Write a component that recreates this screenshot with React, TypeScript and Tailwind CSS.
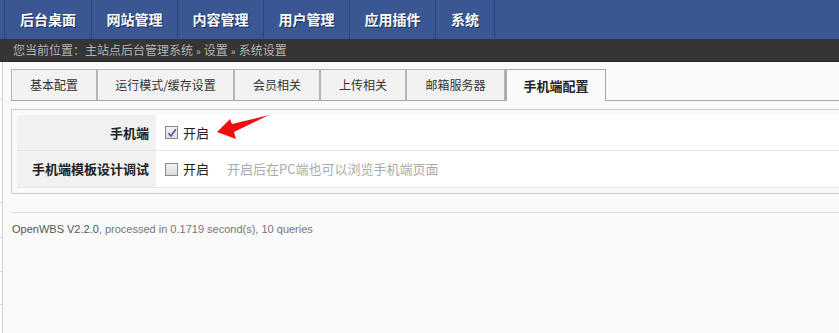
import React from "react";

const navItems = [
  { label: "后台桌面", w: "w-[87px]" },
  { label: "网站管理", w: "w-[86px]" },
  { label: "内容管理", w: "w-[86px]" },
  { label: "用户管理", w: "w-[86px]" },
  { label: "应用插件", w: "w-[86px]" },
  { label: "系统", w: "w-[60px]" },
];

const tabs = [
  { label: "基本配置", w: "w-[86px]" },
  { label: "运行模式/缓存设置", w: "w-[137px]" },
  { label: "会员相关", w: "w-[86px]" },
  { label: "上传相关", w: "w-[86px]" },
  { label: "邮箱服务器", w: "w-[99px]" },
];

function Checkbox({ checked }: { checked?: boolean }) {
  return (
    <span className="inline-flex h-[13px] w-[13px] items-center justify-center border border-[#8a8a8a] bg-gradient-to-b from-[#f4f4f4] to-[#dcdcdc]">
      {checked && (
        <svg width="10" height="10" viewBox="0 0 10 10">
          <path d="M1.5 5.2 L4 8 L8.8 1.2" fill="none" stroke="#4a5a9a" strokeWidth="1.6" />
        </svg>
      )}
    </span>
  );
}

export default function App() {
  const font = { fontFamily: '"Noto Sans CJK SC", "Liberation Sans", sans-serif' };
  return (
    <div className="relative h-[333px] w-[839px] overflow-hidden bg-[#fafafa]" style={font}>
      {/* Top nav */}
      <div className="flex h-[39px] bg-[#3a5793] pl-[4px]">
        {navItems.map((item, i) => (
          <div
            key={item.label}
            className={`${item.w} flex h-full items-center justify-center border-l border-[#2c4479] text-[14px] font-bold text-white [text-shadow:1px_1px_0_#1e2f55] ${
              i === navItems.length - 1 ? "border-r" : ""
            }`}
          >
            {item.label}
          </div>
        ))}
      </div>

      {/* Breadcrumb */}
      <div className="flex h-[23px] items-center border-b border-[#2a2a2a] bg-[#353535] pl-[13px] text-[12px] text-[#b4b4b4]">
        您当前位置：主站点后台管理系统 <span className="mx-[3px] text-[10px]">»</span> 设置{" "}
        <span className="mx-[3px] text-[10px]">»</span> 系统设置
      </div>

      <div className="flex">
        {/* left frame strip */}
        <div className="flex w-[3px] flex-col border-r border-[#d0d0d0] bg-white">
          <div className="h-[38px] border-b border-[#d8d8d8]" />
          <div className="h-[103px] border-b border-[#d8d8d8]" />
          <div className="h-[35px] border-b border-[#d8d8d8]" />
          <div className="h-[34px] border-b border-[#d8d8d8]" />
          <div className="h-[33px] border-b border-[#d8d8d8]" />
          <div className="h-[40px]" />
        </div>

        <div className="flex-1 pl-[8px] pt-[7px]">
          {/* Tabs */}
          <div className="-mr-[10px] flex h-[32px] border-b border-[#aaaaaa]">
            {tabs.map((t) => (
              <div
                key={t.label}
                className={`${t.w} flex items-center justify-center border border-b-0 border-[#b5b5b5] bg-[#f2f2f2] text-[12px] text-[#333]`}
              >
                {t.label}
              </div>
            ))}
            <div className="-mb-px flex w-[101px] items-center justify-center border border-b-0 border-l-2 border-[#aaaaaa] bg-[#fafafa] text-[13px] font-bold text-[#222]">
              手机端配置
            </div>
          </div>

          {/* Settings box */}
          <div className="-mr-[10px] mt-[8px] border border-[#cccccc] p-[5px]">
            <div className="bg-white text-[13px]">
              <div className="flex h-[36px] border-b border-[#e6e6e6]">
                <div className="flex w-[139px] items-center justify-end bg-[#f1f1f1] pr-[7px] font-bold text-[#222]">
                  手机端
                </div>
                <div className="flex items-center pl-[9px] text-[#222]">
                  <Checkbox checked />
                  <span className="ml-[5px]">开启</span>
                </div>
              </div>
              <div className="flex h-[37px] border-b border-[#e6e6e6]">
                <div className="flex w-[139px] items-center justify-end bg-[#f1f1f1] pr-[7px] font-bold text-[#222]">
                  手机端模板设计调试
                </div>
                <div className="flex items-center pl-[9px] text-[#222]">
                  <Checkbox />
                  <span className="ml-[5px]">开启</span>
                  <span className="ml-[18px] text-[#aaaaaa]">开启后在PC端也可以浏览手机端页面</span>
                </div>
              </div>
            </div>
          </div>

          {/* Footer */}
          <div
            className="-mr-[10px] mt-[18px] border-t border-[#dddddd] pl-[1px] pt-[8px] text-[11px] text-[#777]"
            style={{ fontFamily: '"Liberation Sans", Arial, sans-serif' }}
          >
            <span className="text-[#555]">OpenWBS V2.2.0</span>, processed in 0.1719 second(s), 10 queries
          </div>
        </div>
      </div>

      {/* Red arrow annotation */}
      <svg className="absolute left-0 top-0" width="839" height="333" viewBox="0 0 839 333">
        <polygon points="217,132 230,119 232,124 269,115 234,132 236,139" fill="#ee1010" />
      </svg>
    </div>
  );
}
